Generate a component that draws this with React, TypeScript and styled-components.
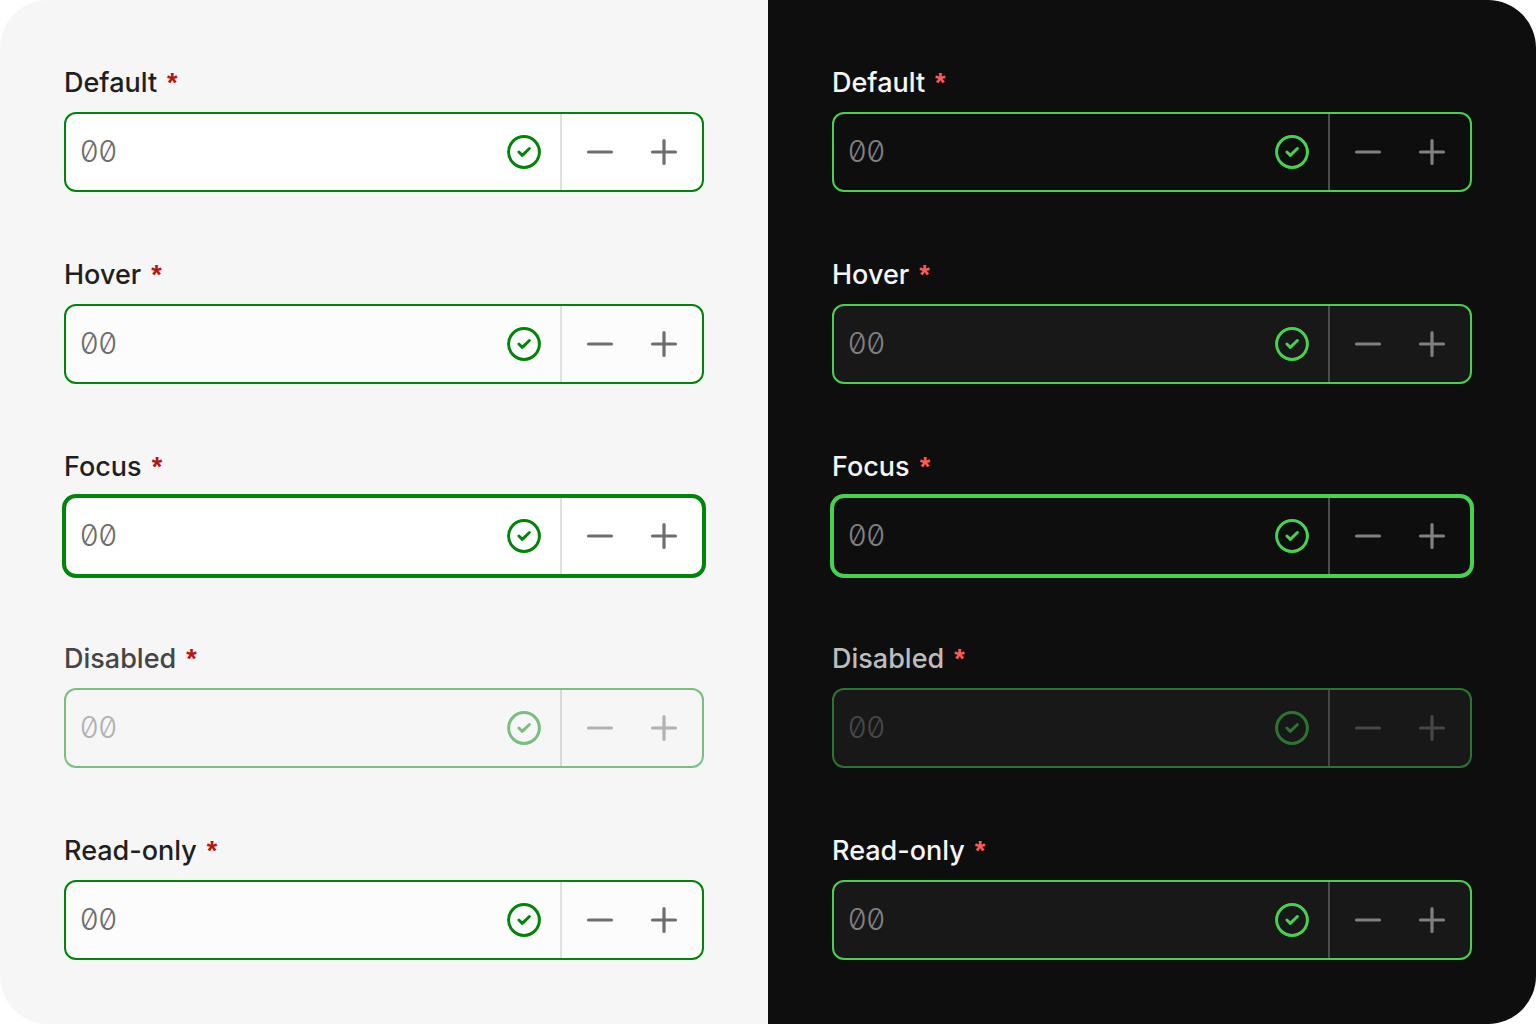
import React, { useId } from "react";
import styled, { createGlobalStyle, ThemeProvider } from "styled-components";

type FieldState = "default" | "hover" | "focus" | "disabled" | "readonly";

const light = {
  page: "#f6f6f6",
  surface: "#ffffff",
  surfaceMuted: "#fcfcfc",
  surfaceDisabled: "#f6f6f6",
  label: "#1f1f1f",
  labelDisabled: "#454545",
  required: "#bb1212",
  success: "#008509",
  successDisabled: "#7abf7e",
  content: "#6e6e6e",
  contentDisabled: "#b2b2b2",
  divider: "#e0e0e0",
  dividerDisabled: "#d9d9d9",
};

const dark: typeof light = {
  page: "#0e0e0e",
  surface: "#0e0e0e",
  surfaceMuted: "#181818",
  surfaceDisabled: "#181818",
  label: "#f6f6f6",
  labelDisabled: "#bdbdbd",
  required: "#ff5a54",
  success: "#47d14f",
  successDisabled: "#2b7530",
  content: "#808080",
  contentDisabled: "#474747",
  divider: "#4d4d4d",
  dividerDisabled: "#454545",
};

type Palette = typeof light;

const GlobalStyle = createGlobalStyle`
  *, *::before, *::after { box-sizing: border-box; }
  body { margin: 0; background: #ffffff; }
`;

const Page = styled.main`
  display: grid;
  grid-template-columns: repeat(2, minmax(0, 1fr));
  min-height: 100vh;
  overflow: hidden;
  border-radius: 48px;
  font-family: Inter, "Liberation Sans", sans-serif;
`;

const Panel = styled.section`
  display: flex;
  flex-direction: column;
  gap: 64px;
  padding: 64px;
  background: ${({ theme }) => (theme as Palette).page};
`;

const Field = styled.div`
  display: flex;
  flex-direction: column;
  gap: 10px;
`;

const Label = styled.label<{ $disabled: boolean }>`
  display: flex;
  align-items: baseline;
  gap: 10px;
  height: 38px;
  font-size: 27px;
  font-weight: 500;
  line-height: 38px;
  color: ${({ theme, $disabled }) =>
    $disabled ? (theme as Palette).labelDisabled : (theme as Palette).label};
`;

const Required = styled.span`
  font-family: "Liberation Sans", Arial, sans-serif;
  font-weight: 700;
  color: ${({ theme }) => (theme as Palette).required};
`;

const surfaceFor = (t: Palette, state: FieldState) => {
  if (state === "disabled") return t.surfaceDisabled;
  if (state === "hover" || state === "readonly") return t.surfaceMuted;
  return t.surface;
};

const Control = styled.div<{ $state: FieldState }>`
  --accent: ${({ theme, $state }) =>
    $state === "disabled" ? (theme as Palette).successDisabled : (theme as Palette).success};
  --content: ${({ theme, $state }) =>
    $state === "disabled" ? (theme as Palette).contentDisabled : (theme as Palette).content};
  --divider: ${({ theme, $state }) =>
    $state === "disabled" ? (theme as Palette).dividerDisabled : (theme as Palette).divider};
  display: flex;
  align-items: stretch;
  height: 80px;
  overflow: hidden;
  border: 2px solid var(--accent);
  border-radius: 12px;
  background: ${({ theme, $state }) => surfaceFor(theme as Palette, $state)};
  box-shadow: ${({ $state }) => ($state === "focus" ? "0 0 0 2px var(--accent)" : "none")};
`;

const NumberInput = styled.input`
  flex: 1;
  min-width: 0;
  padding: 0 14px 2px;
  border: 0;
  outline: 0;
  background: transparent;
  color: var(--content);
  font-family: inherit;
  font-size: 30px;
  font-weight: 350;
  font-feature-settings: "zero" 1;

  &::placeholder {
    color: var(--content);
    opacity: 1;
  }
`;

const Status = styled.span`
  display: flex;
  align-items: center;
  padding-right: 16px;
  color: var(--accent);
`;

const Stepper = styled.div`
  display: flex;
  padding: 0 6px;
  border-left: 2px solid var(--divider);
`;

const StepButton = styled.button`
  display: flex;
  align-items: center;
  justify-content: center;
  width: 64px;
  padding: 0;
  border: 0;
  background: transparent;
  color: var(--content);
`;

const CheckIcon = () => (
  <svg width="40" height="40" viewBox="0 0 40 40" fill="none" stroke="currentColor" strokeWidth="3" strokeLinecap="round" strokeLinejoin="round" aria-hidden="true">
    <circle cx="20" cy="20" r="15.4" />
    <path d="M14.9 20 18.3 23.3 25.4 16.5" />
  </svg>
);

const StepIcon = ({ plus = false }: { plus?: boolean }) => (
  <svg width="32" height="32" viewBox="0 0 32 32" fill="none" stroke="currentColor" strokeWidth="3.2" strokeLinecap="round" aria-hidden="true">
    <path d={plus ? "M4.5 16h23M16 4.5v23" : "M4.5 16h23"} />
  </svg>
);

const NumberField = ({ label, state }: { label: string; state: FieldState }) => {
  const id = useId();
  const disabled = state === "disabled";
  const locked = disabled || state === "readonly";
  return (
    <Field>
      <Label htmlFor={id} $disabled={disabled}>
        {label}
        <Required>*</Required>
      </Label>
      <Control $state={state}>
        <NumberInput
          id={id}
          type="text"
          inputMode="numeric"
          placeholder="00"
          required
          disabled={disabled}
          readOnly={state === "readonly"}
        />
        <Status>
          <CheckIcon />
        </Status>
        <Stepper>
          <StepButton type="button" aria-label="Decrease" disabled={locked}>
            <StepIcon />
          </StepButton>
          <StepButton type="button" aria-label="Increase" disabled={locked}>
            <StepIcon plus />
          </StepButton>
        </Stepper>
      </Control>
    </Field>
  );
};

const fields: { label: string; state: FieldState }[] = [
  { label: "Default", state: "default" },
  { label: "Hover", state: "hover" },
  { label: "Focus", state: "focus" },
  { label: "Disabled", state: "disabled" },
  { label: "Read-only", state: "readonly" },
];

export default function App() {
  return (
    <>
      <GlobalStyle />
      <Page>
        {[light, dark].map((palette, i) => (
          <ThemeProvider key={i} theme={palette}>
            <Panel>
              {fields.map((field) => (
                <NumberField key={field.state} {...field} />
              ))}
            </Panel>
          </ThemeProvider>
        ))}
      </Page>
    </>
  );
}
